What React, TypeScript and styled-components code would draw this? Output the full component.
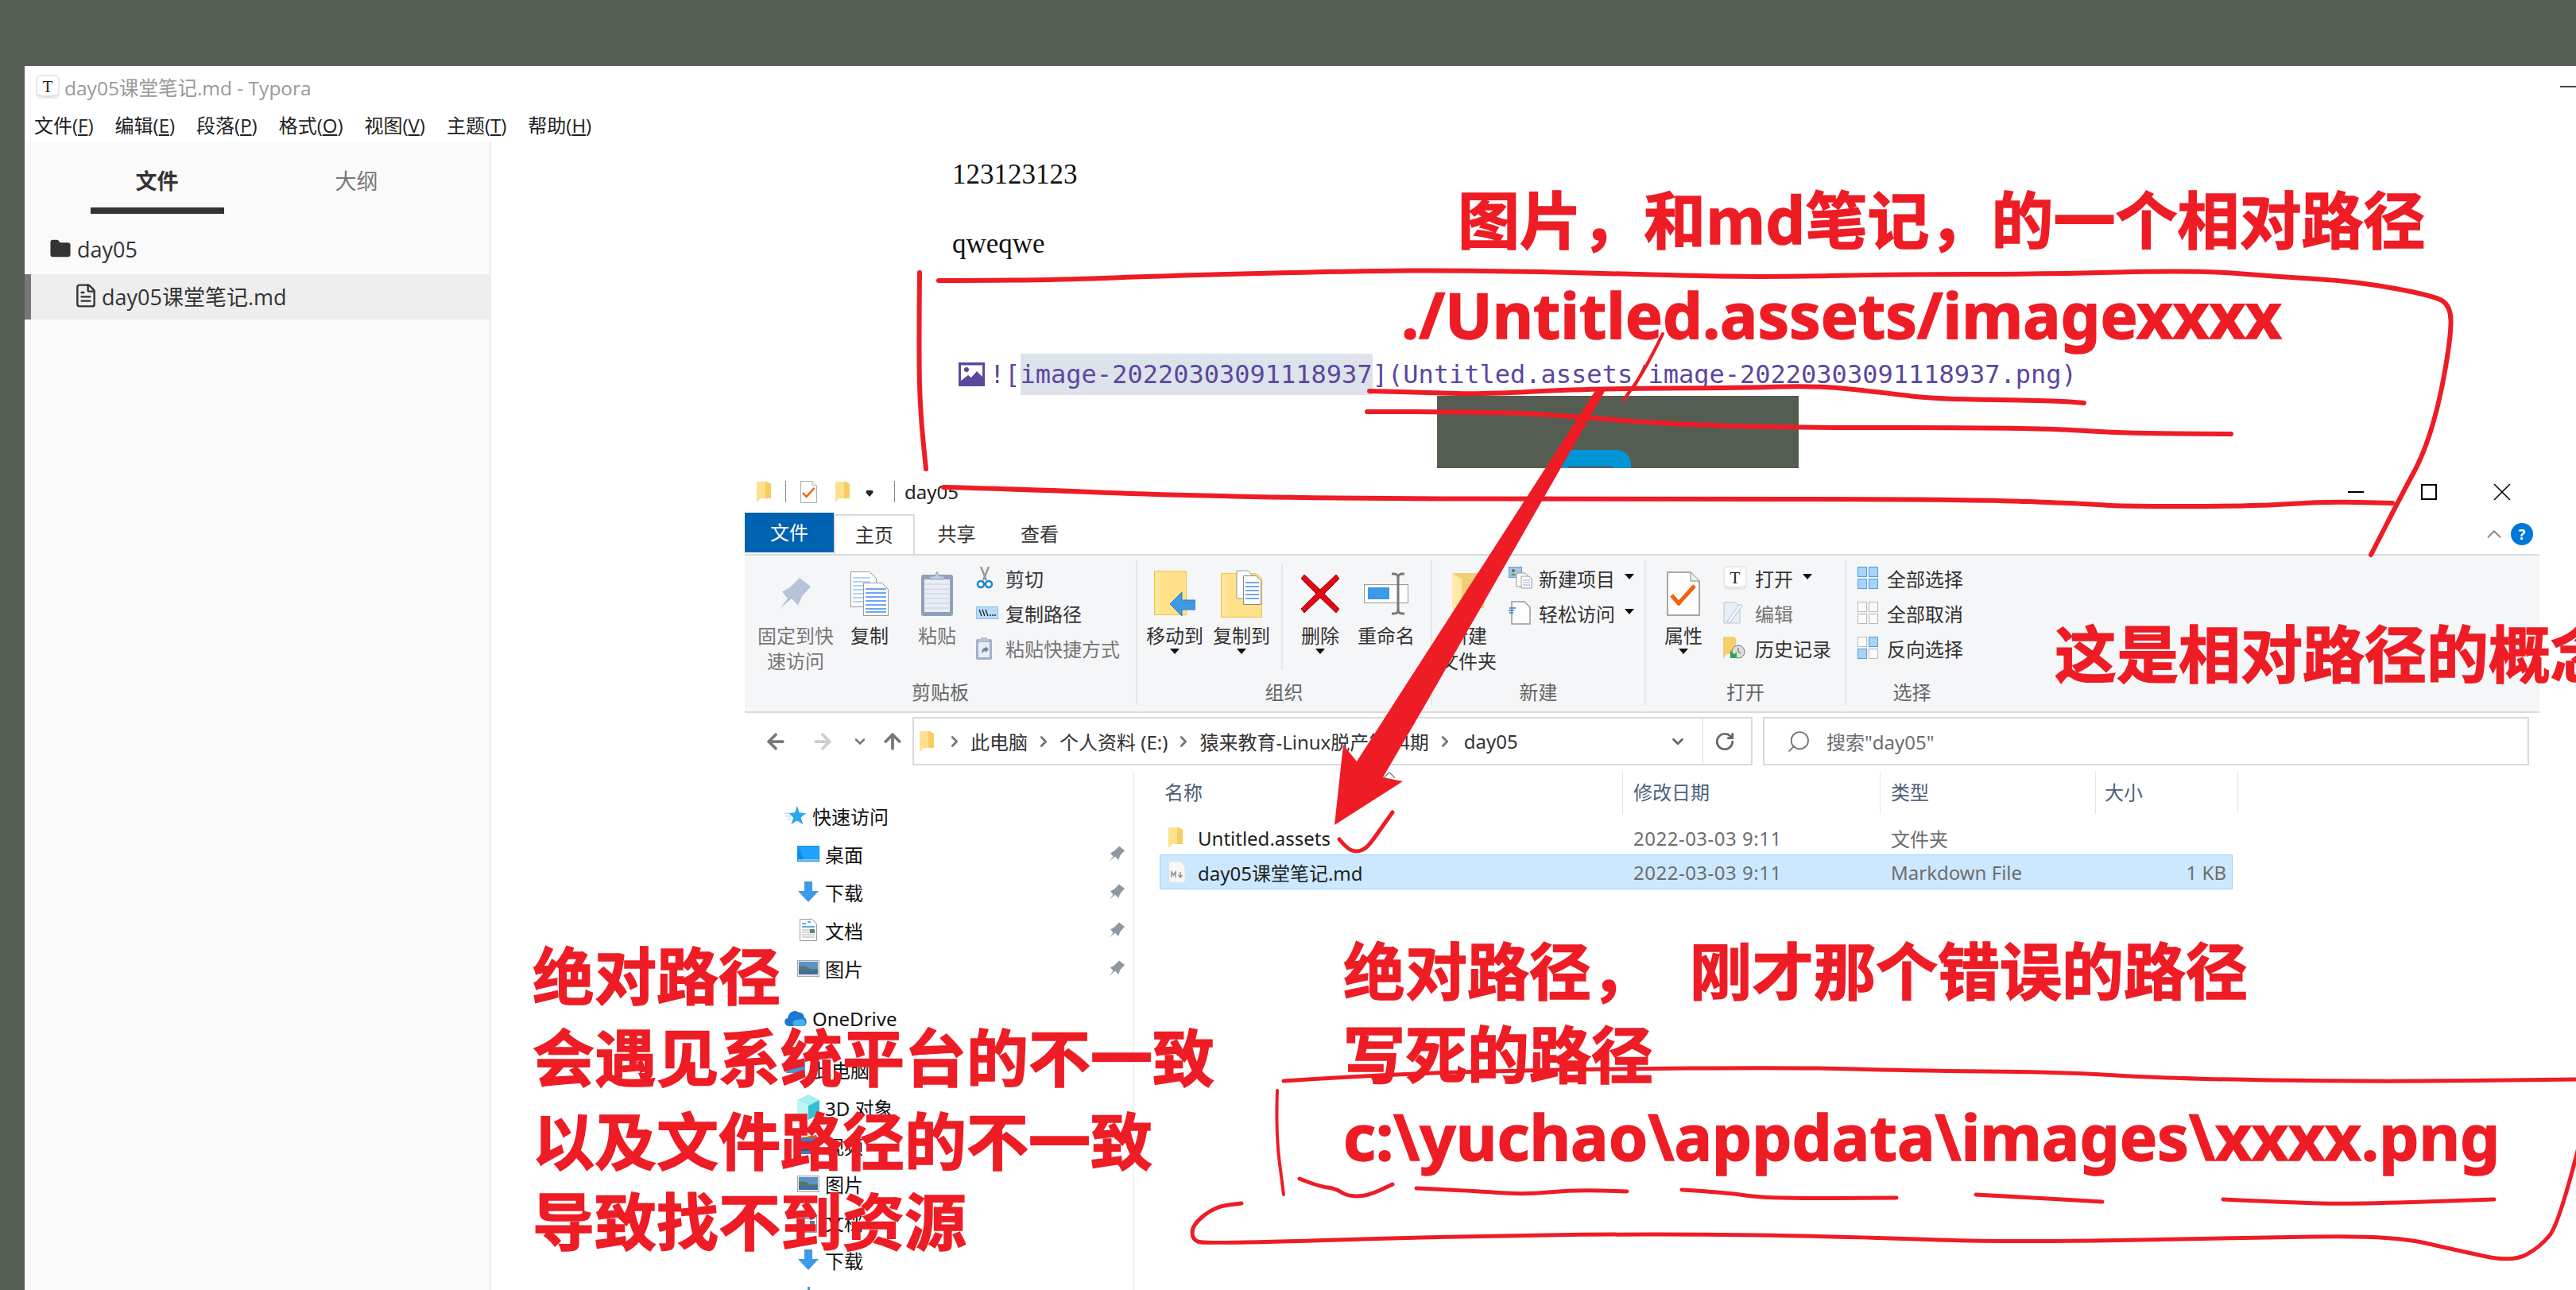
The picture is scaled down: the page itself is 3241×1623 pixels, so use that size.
import React from 'react';
import styled, { createGlobalStyle } from 'styled-components';
import { ArrowLeft, ArrowRight, ArrowUp, ChevronDown, ChevronRight, ChevronUp, FileText, Folder, RotateCw, Search } from 'lucide-react';

const RED = '#ee1c25';
const UI_FONT = '"Noto Sans", "Noto Sans CJK SC", sans-serif';

const GlobalStyle = createGlobalStyle`
  html, body { margin: 0; padding: 0; background: #555d53; }
  * { box-sizing: border-box; }
`;

/* ---------- hand drawn marks ---------- */

type Pt = [number, number];

const smooth = (pts: Pt[]) => {
  let d = `M${pts[0][0]} ${pts[0][1]}`;
  for (let i = 1; i < pts.length - 1; i++) {
    const mx = (pts[i][0] + pts[i + 1][0]) / 2;
    const my = (pts[i][1] + pts[i + 1][1]) / 2;
    d += ` Q${pts[i][0]} ${pts[i][1]} ${mx} ${my}`;
  }
  const last = pts[pts.length - 1];
  return `${d} L${last[0]} ${last[1]}`;
};

const strokes: { w: number; pts: Pt[] }[] = [
  // upper loop
  { w: 6, pts: [[1181, 353], [1310, 353], [1465, 347], [1703, 341], [1844, 340], [2033, 344], [2200, 349], [2399, 345], [2565, 345], [2764, 340], [2864, 348], [2964, 354], [3063, 372], [3083, 385], [3084, 420], [3070, 503], [3050, 570], [3023, 620], [2983, 698]] },
  { w: 6, pts: [[1157, 343], [1156, 447], [1158, 520], [1165, 590]] },
  { w: 6, pts: [[1187, 613], [1300, 616], [1443, 622], [1663, 627], [2050, 628], [2466, 628], [2632, 634], [2665, 637], [2837, 637], [2924, 631], [3010, 633]] },
  // under the code line
  { w: 6, pts: [[1723, 492], [1800, 494], [1867, 496], [1993, 489], [2200, 488], [2286, 485], [2379, 495], [2432, 502], [2585, 504], [2622, 507]] },
  { w: 6, pts: [[1720, 518], [1890, 518], [1993, 525], [2093, 533], [2233, 538], [2565, 538], [2665, 545], [2807, 546]] },
  { w: 4, pts: [[2092, 420], [2070, 465], [2043, 503]] },
  // tick beside Untitled.assets
  { w: 5, pts: [[1685, 1056], [1695, 1068], [1707, 1072], [1720, 1067], [1737, 1043], [1752, 1022]] },
  // lower loop
  { w: 5, pts: [[1615, 1360], [1752, 1351], [1987, 1345], [2269, 1343], [2398, 1347], [2598, 1349], [2727, 1357], [2985, 1361], [3245, 1358]] },
  { w: 4, pts: [[1607, 1372], [1605, 1425], [1615, 1503]] },
  { w: 5, pts: [[3245, 1440], [3220, 1539], [3196, 1569], [3161, 1588], [3091, 1573], [3008, 1554], [2809, 1558], [2515, 1563], [2339, 1556], [2081, 1552], [1811, 1556], [1517, 1565], [1500, 1560], [1500, 1541], [1529, 1518], [1562, 1514]] },
  // scribbles under the path
  { w: 5, pts: [[1635, 1483], [1660, 1493], [1680, 1495], [1695, 1505], [1720, 1505], [1752, 1490]] },
  { w: 5, pts: [[1782, 1495], [1850, 1498], [1917, 1503], [1980, 1497], [2047, 1499]] },
  { w: 5, pts: [[2116, 1497], [2170, 1500], [2222, 1508], [2386, 1507]] },
  { w: 5, pts: [[2486, 1503], [2560, 1507], [2645, 1512]] },
  { w: 5, pts: [[2797, 1509], [2880, 1513], [2961, 1515], [3138, 1509]] },
];

const Marks = () => (
  <MarkLayer viewBox="0 0 3241 1623" fill="none">
    {strokes.map((s, i) => (
      <path key={i} d={smooth(s.pts)} stroke={RED} strokeWidth={s.w} strokeLinecap="round" strokeLinejoin="round" />
    ))}
    <path
      d="M2010 487 L2022 487 L1797 880 L1740 978 L1765 983 L1679 1038 L1690 937 L1707 958 L1757 880 Z"
      fill={RED}
    />
  </MarkLayer>
);

/* ---------- icons ---------- */

const FolderTile = () => (
  <svg width="18" height="28" viewBox="0 0 18 28">
    <path d="M0 1h13l5 3v18H5l-5 5z" fill="#ffe08f" />
    <path d="M11 1h2l5 3v18h-7z" fill="#f6cd62" />
  </svg>
);

const CheckDoc = ({ w, h }: { w: number; h: number }) => (
  <svg width={w} height={h} viewBox="0 0 42 56">
    <path d="M1 1h29l11 11v43H1z" fill="#fff" stroke="#8d8d8d" strokeWidth="1.5" />
    <path d="M30 1v11h11" fill="#eee" stroke="#aaa" strokeWidth="1.5" />
    <path d="M6 30l9 10 20-22" fill="none" stroke="#f26010" strokeWidth="5" />
  </svg>
);

const PinIcon = ({ size, color }: { size: number; color: string }) => (
  <svg width={size} height={size} viewBox="0 0 42 42">
    <path d="M1 40L11 27 4 18.500 14 13 26 1 40 12 29 24 24 36 16 27z" fill={color} />
  </svg>
);

const CopyIcon = () => (
  <svg width="48" height="56" viewBox="0 0 48 56">
    <path d="M.5.5h24l8 8v36H.5z" fill="#fff" stroke="#999" />
    {[8, 13, 18, 23, 28, 33, 38].map(y => (
      <path key={y} d={`M3 ${y}h22`} stroke="#b7d2f5" strokeWidth="2" />
    ))}
    <path d="M16.500 14.500h23l8 8v33h-31z" fill="#fff" stroke="#999" />
    {[22, 27, 32, 37, 42, 47, 51].map(y => (
      <path key={y} d={`M19 ${y}h26`} stroke="#6ea6f0" strokeWidth="2" />
    ))}
  </svg>
);

const ClipboardIcon = () => (
  <svg width="40" height="57" viewBox="0 0 40 57">
    <rect y="5" width="40" height="52" rx="3" fill="#8f9fbd" />
    <rect x="4" y="11" width="32" height="41" fill="#e9edf6" />
    {[17, 23, 29, 35, 41, 47].map(y => (
      <path key={y} d={`M5 ${y}h30`} stroke="#cfd6e4" strokeWidth="1.500" />
    ))}
    <path d="M11 11V7h6l3-6 3 6h6v4z" fill="#c4ccdc" stroke="#8f9fbd" />
  </svg>
);

const ScissorsIcon = () => (
  <svg width="22" height="28" viewBox="0 0 22 28" fill="none">
    <path d="M6 0l7 17M16 0L9 17" stroke="#999" strokeWidth="2.500" />
    <circle cx="6" cy="22" r="4" stroke="#1c85c7" strokeWidth="2.500" />
    <circle cx="16" cy="22" r="4" stroke="#1c85c7" strokeWidth="2.500" />
  </svg>
);

const CopyPathIcon = () => (
  <svg width="28" height="16" viewBox="0 0 28 16" fill="none">
    <rect x=".5" y=".5" width="27" height="15" fill="#b9dcf8" stroke="#8bbfe6" />
    <path d="M4 4l3 8M8 4l3 8M12 4l3 8" stroke="#222" strokeWidth="1.300" />
    <path d="M17 11h2M20 11h2M23 11h2" stroke="#222" strokeWidth="1.500" />
  </svg>
);

const PasteShortcutIcon = () => (
  <svg width="20" height="29" viewBox="0 0 20 29">
    <rect y="3" width="20" height="26" rx="2" fill="#a3b1ca" />
    <rect x="3" y="7" width="14" height="19" fill="#e8edf5" />
    <path d="M6 3V1h8v2h2v3H4V3z" fill="#b9c3d6" />
    <path d="M7 22c0-6 2-8 5-8v-2l4 4-4 4v-2c-2 0-4 1-5 4z" fill="#6f86a8" />
  </svg>
);

const MoveToIcon = () => (
  <svg width="52" height="57" viewBox="0 0 52 57">
    <path d="M.5.500h40v55H.5z" fill="#ffe18c" stroke="#edc649" />
    <path d="M4 2v52M7 2v52" stroke="#fff0bd" strokeWidth="1" />
    <path d="M20 42l15-15v10h17v12H35v8z" fill="#3f9ae6" stroke="#2c7cbf" />
  </svg>
);

const CopyToIcon = () => (
  <svg width="52" height="60" viewBox="0 0 52 60">
    <path d="M.5 4.500h44l7 6v49H.5z" fill="#ffe18c" stroke="#edc649" />
    <path d="M4 6v52M7 6v52" stroke="#fff0bd" strokeWidth="1" />
    <path d="M20 1h14l5 5v30H20z" fill="#fff" stroke="#999" />
    <path d="M28.500 7.500h16l6 6v30h-22z" fill="#fff" stroke="#888" />
    {[16, 21, 26, 31, 36].map(y => (
      <path key={y} d={`M31 ${y}h17`} stroke="#5f9eea" strokeWidth="1.800" />
    ))}
  </svg>
);

const DeleteIcon = () => (
  <svg width="50" height="50" viewBox="0 0 50 50">
    <path d="M5 1l20 19L45 1l4 5-19 19 19 19-4 5-20-19L5 49l-4-5 19-19L1 6z" fill="#e30613" stroke="#8c1010" />
  </svg>
);

const RenameIcon = () => (
  <svg width="56" height="54" viewBox="0 0 56 54" fill="none">
    <rect x=".5" y="15.500" width="55" height="23" fill="#fff" stroke="#999" />
    <rect x="5" y="19" width="27" height="15" fill="#3b99e6" />
    <path d="M35 2h3c4 0 5 2 5 6v38c0 4-1 6-5 6h-3M51 2h-3c-4 0-5 2-5 6v38c0 4 1 6 5 6h3" stroke="#777" strokeWidth="3" />
  </svg>
);

const NewFolderIcon = () => (
  <svg width="40" height="52" viewBox="0 0 40 52">
    <path d="M0 0l12 8v44L0 44z" fill="#ffe9a8" />
    <path d="M0 0h40v44H12V8z" fill="#f0cf75" />
  </svg>
);

const NewItemIcon = () => (
  <svg width="30" height="28" viewBox="0 0 30 28">
    <rect x=".5" y=".5" width="16" height="13" fill="#9ec7ea" stroke="#6e9cc4" />
    <circle cx="6" cy="5" r="2" fill="#8a5a3a" />
    <path d="M3 11c0-3 6-3 6 0z" fill="#4f9a5a" />
    <path d="M10 8h11l3 3v14H10z" fill="#fff" stroke="#999" />
    <path d="M16 12h10l3 3v12H16z" fill="#fff" stroke="#999" />
    {[17, 20, 23].map(y => (
      <path key={y} d={`M18 ${y}h9`} stroke="#88aee0" />
    ))}
  </svg>
);

const EasyAccessIcon = () => (
  <svg width="28" height="30" viewBox="0 0 28 30">
    <path d="M4 1h16l7 7v21H4z" fill="#fff" stroke="#999" strokeWidth="1.500" />
    <path d="M1 9h8M0 12h7M1 15h5" stroke="#2b7cc4" strokeWidth="1.500" />
  </svg>
);

const TyporaTile = ({ size }: { size: number }) => (
  <svg width={size} height={size} viewBox="0 0 30 30">
    <rect x="1" y="1" width="28" height="28" rx="5" fill="#fff" stroke="#e2e2e2" strokeWidth="1.500" />
    <path d="M2 25c4 3 22 3 26 0" fill="none" stroke="#ddd" strokeWidth="2" />
    <text x="15" y="22" textAnchor="middle" fontFamily="Liberation Serif, serif" fontSize="21" fill="#222">T</text>
  </svg>
);

const EditIcon = () => (
  <svg width="26" height="28" viewBox="0 0 26 28">
    <path d="M1 1h15l5 5v21H1z" fill="#e6eef8" stroke="#b8c6da" />
    <path d="M5 25L21 3l3 2L8 27z" fill="#fbfcfe" stroke="#aebcd1" />
  </svg>
);

const HistoryIcon = () => (
  <svg width="28" height="28" viewBox="0 0 28 28">
    <path d="M0 0h14l2 3v19H4l-4 6z" fill="#f5d06a" />
    <circle cx="19" cy="19" r="8" fill="#ddd" stroke="#777" />
    <path d="M19 14v5l3 2" stroke="#555" fill="none" />
    <path d="M9 17l5 5 3-3v8H9z" fill="#2fa84f" />
  </svg>
);

const PanesIcon = ({ on }: { on: boolean[] }) => (
  <svg width="26" height="28" viewBox="0 0 26 28">
    {[[0, 0], [14, 0], [0, 15], [14, 15]].map(([x, y], i) => (
      <rect
        key={i}
        x={x + 0.5}
        y={y + 0.5}
        width="11"
        height="12"
        fill={on[i] ? '#a9d3f7' : '#fbfbfb'}
        stroke={on[i] ? '#4ba1e8' : '#bbb'}
      />
    ))}
  </svg>
);

const StarIcon = () => (
  <svg width="30" height="26" viewBox="0 0 30 26">
    <path d="M17 0l3 9 9 1-7 6 3 9-8-5-8 5 3-9-6-6 8-1z" fill="#2ea5ef" />
    <path d="M0 10h7M2 14h6M4 18h4" stroke="#a8d8f7" strokeWidth="1.300" />
  </svg>
);

const DesktopIcon = () => (
  <svg width="28" height="20" viewBox="0 0 28 20">
    <rect width="28" height="20" fill="#0f8ee8" />
    <path d="M1 1h26v17H9z" fill="#21a3fb" />
    <path d="M1 18h26" stroke="#d7efff" />
  </svg>
);

const DownloadIcon = () => (
  <svg width="28" height="26" viewBox="0 0 28 26">
    <path d="M9 0h10v12h8L14 26 1 12h8z" fill="#3f9ae6" />
  </svg>
);

const DocsIcon = () => (
  <svg width="22" height="28" viewBox="0 0 22 28" fill="none">
    <path d="M.5.5h15l6 6v21H.5z" fill="#fff" stroke="#999" />
    <path d="M3 6h5M10 4h4M3 10h16" stroke="#2c8ee0" strokeWidth="1.500" />
    <path d="M3 14h10M3 17h10M3 20h16M3 23h16" stroke="#aaa" />
    <rect x="13" y="13" width="6" height="5" fill="#5f7f88" />
  </svg>
);

const PictureIcon = () => (
  <svg width="28" height="21" viewBox="0 0 28 21">
    <rect x=".5" y=".5" width="27" height="20" fill="#e8e8e8" stroke="#aaa" />
    <rect x="2" y="2" width="24" height="9" fill="#5b93c9" />
    <path d="M2 8c6-2 10 0 14 3h10v7H2z" fill="#56786a" />
    <rect x="2" y="13" width="24" height="5" fill="#3f6f9d" />
  </svg>
);

const CloudIcon = () => (
  <svg width="34" height="24" viewBox="0 0 34 24">
    <path d="M6 24C-1 23-2 13 5 12 6 4 14-2 21 3c5 0 9 3 9 8 5 1 5 13-1 13z" fill="#1b78d0" />
    <path d="M14 24c-4-6 2-11 7-9 3-3 13-2 11 6-1 2-2 3-4 3z" fill="#3fb0ef" />
  </svg>
);

const PcIcon = () => (
  <svg width="28" height="24" viewBox="0 0 28 24">
    <rect x="2" width="24" height="17" fill="#3f9ae6" />
    <path d="M8 21h12" stroke="#777" strokeWidth="3" />
  </svg>
);

const CubeIcon = () => (
  <svg width="28" height="32" viewBox="0 0 28 32">
    <path d="M14 0l14 7-14 7L0 7z" fill="#a8edf2" />
    <path d="M0 7l14 7v18L0 25z" fill="#bff3f2" />
    <path d="M28 7L14 14v18l14-7z" fill="#36bdd3" />
  </svg>
);

const VideoIcon = () => (
  <svg width="28" height="26" viewBox="0 0 28 26">
    <rect y="4" width="28" height="20" fill="#4a79b5" />
    <rect x="4" y="8" width="20" height="12" fill="#2c5a9a" />
    <path d="M0 4l24-4 2 4z" fill="#c9662b" />
  </svg>
);

const MusicTick = () => (
  <svg width="28" height="28" viewBox="0 0 28 28">
    <path d="M13 0h3v28h-3z" fill="#3f9ae6" />
  </svg>
);

const MdFileIcon = () => (
  <svg width="22" height="28" viewBox="0 0 22 28">
    <path d="M1 1h14l6 6v20H1z" fill="#f7f7f7" stroke="#e3e3e3" />
    <path d="M4 21v-7l2.500 4 2.500-4v7" fill="none" stroke="#888" strokeWidth="1.400" />
    <path d="M15 14v6M12.500 18l2.500 3 2.500-3" fill="none" stroke="#888" strokeWidth="1.400" />
  </svg>
);

const ImageGlyph = () => (
  <svg width="33" height="30" viewBox="0 0 33 30">
    <path d="M0 0h33v30H0z" fill="#5c479f" />
    <path d="M3 3h27v15l-7-7-7 8-4-3-9 7z" fill="#fff" />
    <circle cx="10" cy="9" r="3" fill="#5c479f" />
    <path d="M3 3h27" stroke="#5c479f" />
  </svg>
);

/* ---------- page ---------- */

const Page = styled.div`
  position: relative;
  width: 3241px;
  height: 1623px;
  padding: 83px 0 0 31px;
  overflow: hidden;
  background: #555d53;
  font-family: ${UI_FONT};
`;

const MarkLayer = styled.svg`
  position: absolute;
  left: 0;
  top: 0;
  width: 3241px;
  height: 1623px;
  pointer-events: none;
  z-index: 2;
`;

const Note = styled.div<{ $x: number; $y: number }>`
  position: absolute;
  left: ${p => p.$x}px;
  top: ${p => p.$y - 54}px;
  height: 100px;
  line-height: 100px;
  font-family: "Noto Sans CJK SC", sans-serif;
  font-weight: 700;
  font-size: 78px;
  color: ${RED};
  -webkit-text-stroke: 1.5px ${RED};
  white-space: pre;
  z-index: 3;
`;

const LatinNote = styled(Note)<{ $size: number }>`
  font-family: "Noto Sans", "Noto Sans CJK SC", sans-serif;
  font-size: ${p => p.$size}px;
  margin-top: -2px;
`;

/* typora */

const Typora = styled.div`
  height: 100%;
  display: flex;
  flex-direction: column;
  background: #fff;
  font-family: "Open Sans", "Noto Sans CJK SC", sans-serif;
`;

const TyporaTitle = styled.div`
  height: 52px;
  display: flex;
  align-items: center;
  gap: 6px;
  padding-left: 14px;
  font-size: 24.5px;
  color: #999;
  svg:last-child {
    margin-left: auto;
  }
`;

const MenuBar = styled.div`
  height: 43px;
  display: flex;
  align-items: center;
  gap: 27px;
  padding-left: 12px;
  font-size: 24px;
  color: #222;
`;

const TyporaBody = styled.div`
  flex: 1;
  display: flex;
  min-height: 0;
`;

const Sidebar = styled.aside`
  width: 587px;
  background: #fafafa;
  border-right: 2px solid #eee;
  color: #333;
`;

const SideTabs = styled.div`
  height: 91px;
  display: flex;
  padding-left: 41px;
`;

const SideTab = styled.div<{ $active?: boolean }>`
  width: 251px;
  display: flex;
  justify-content: center;
  align-items: flex-end;
  font-size: 27px;
  line-height: 36px;
  padding-bottom: 23px;
  font-weight: ${p => (p.$active ? 700 : 400)};
  color: ${p => (p.$active ? '#333' : '#777')};
  position: relative;
  &::after {
    content: '';
    display: ${p => (p.$active ? 'block' : 'none')};
    position: absolute;
    left: 42px;
    bottom: 0;
    width: 168px;
    height: 8px;
    background: #333;
  }
`;

const FolderRow = styled.div`
  height: 76px;
  display: flex;
  align-items: center;
  gap: 7px;
  padding: 12px 0 0 31px;
  font-size: 27px;
`;

const FileRow = styled.div`
  height: 57px;
  display: flex;
  align-items: center;
  gap: 4px;
  padding: 0 0 3px 53px;
  font-size: 27px;
  background: #eee;
  border-left: 8px solid #777;
`;

const Editor = styled.main`
  flex: 1;
  padding: 19px 0 0 580px;
`;

const Para = styled.p`
  margin: 0 0 41px;
  line-height: 46px;
  font-family: "Liberation Serif", serif;
  font-size: 35px;
  color: #111;
`;

const CodeLine = styled.div`
  margin-top: 115px;
  height: 52px;
  display: flex;
  align-items: center;
  font-family: "DejaVu Sans Mono", monospace;
  font-size: 32px;
  line-height: 52px;
  color: #5c479f;
  white-space: pre;
  svg {
    margin: 0 6px 0 8px;
  }
`;

const Selected = styled.span`
  background: #dce3eb;
`;

const Preview = styled.div`
  position: relative;
  width: 455px;
  height: 91px;
  margin: 1px 0 0 610px;
  background: #555d53;
  overflow: hidden;
`;

const PreviewBadge = styled.div`
  position: absolute;
  left: 143px;
  bottom: 0;
  width: 101px;
  height: 23px;
  border-radius: 18px 18px 0 0;
  background: #0095d5;
  &::after {
    content: '';
    position: absolute;
    left: 22px;
    bottom: 0;
    width: 57px;
    height: 3px;
    border-radius: 4px 4px 0 0;
    background: #3d6a80;
  }
`;

/* explorer */

const Explorer = styled.section`
  position: absolute;
  left: 937px;
  top: 590px;
  right: 46px;
  bottom: 0;
  z-index: 1;
  display: flex;
  flex-direction: column;
  background: #fff;
  font-size: 24px;
  color: #222;
`;

const WinBar = styled.div`
  height: 57px;
  display: flex;
  align-items: center;
  padding-left: 15px;
`;

const QuickSep = styled.span<{ $flush?: boolean }>`
  width: 1px;
  height: 27px;
  margin: ${p => (p.$flush ? '0' : '0 18px')};
  background: #888;
`;

const QuickGap = styled.span`
  width: 23px;
`;

const QuickDrop = styled.span`
  width: 0;
  height: 0;
  margin: 6px 26px 0 20px;
  border: 5px solid transparent;
  border-top: 6px solid #222;
  border-bottom: 0;
  box-shadow: 0 -3px 0 -1px #222;
`;

const WinTitle = styled.span`
  margin-left: 12px;
  line-height: 32px;
`;

const WinControls = styled.div`
  margin-left: auto;
  padding-right: 1px;
  display: flex;
`;

const WinButton = styled.div`
  width: 92px;
  display: flex;
  justify-content: center;
  align-items: center;
`;

const TabRow = styled.div`
  height: 50px;
  display: flex;
  align-items: center;
`;

const RibbonTab = styled.div<{ $kind?: 'file' | 'active'; $w: number }>`
  width: ${p => p.$w}px;
  height: 50px;
  display: flex;
  justify-content: center;
  align-items: center;
  padding-bottom: 3px;
  margin-top: ${p => (p.$kind === 'file' ? -4 : 0)}px;
  background: ${p => (p.$kind === 'file' ? '#0063b1' : '#fff')};
  color: ${p => (p.$kind === 'file' ? '#fff' : '#333')};
  border: ${p => (p.$kind === 'active' ? '2px solid #dadbdc' : '0')};
  border-bottom: 0;
`;

const TabEnd = styled.div`
  margin-left: auto;
  padding-right: 8px;
  display: flex;
  align-items: center;
  gap: 6px;
  color: #888;
`;

const Help = styled.div`
  width: 28px;
  height: 28px;
  border-radius: 50%;
  display: flex;
  justify-content: center;
  align-items: center;
  background: #0078d7;
  color: #fff;
  font-size: 18px;
  font-weight: 700;
`;

const Ribbon = styled.div`
  height: 200px;
  display: flex;
  padding: 6px 0 8px;
  background: #f5f6f7;
  border-top: 2px solid #dadbdc;
  border-bottom: 2px solid #dadbdc;
`;

const Group = styled.div<{ $w: number; $last?: boolean }>`
  width: ${p => p.$w}px;
  display: flex;
  flex-direction: column;
  border-right: 2px solid ${p => (p.$last ? 'transparent' : '#e4e6e8')};
`;

const GroupBody = styled.div<{ $pad: number }>`
  height: 150px;
  margin-top: 4px;
  display: flex;
  padding-left: ${p => p.$pad}px;
`;

const GroupLabel = styled.div`
  height: 32px;
  line-height: 32px;
  text-align: center;
  color: #666;
`;

const Large = styled.div<{ $w: number; $muted?: boolean; $gap?: number }>`
  width: ${p => p.$w}px;
  margin-left: ${p => p.$gap ?? 0}px;
  display: flex;
  flex-direction: column;
  align-items: center;
  text-align: center;
  line-height: 32px;
  color: ${p => (p.$muted ? '#777' : '#333')};
  white-space: nowrap;
`;

const LargeIcon = styled.div`
  height: 75px;
  display: flex;
  align-items: center;
  justify-content: center;
`;

const Caret = styled.span`
  width: 0;
  height: 0;
  border: 6px solid transparent;
  border-top: 7px solid #111;
  border-bottom: 0;
`;

const SubDivider = styled.div`
  width: 2px;
  height: 134px;
  margin: 0 15px 0 14px;
  background: #e4e6e8;
`;

const SmallColumn = styled.div<{ $gap: number }>`
  margin: -4px 0 0 ${p => p.$gap}px;
  display: flex;
  flex-direction: column;
`;

const Small = styled.div<{ $muted?: boolean }>`
  height: 44px;
  display: flex;
  align-items: center;
  color: ${p => (p.$muted ? '#777' : '#333')};
  white-space: nowrap;
`;

const SmallIcon = styled.span<{ $w?: number }>`
  width: ${p => p.$w ?? 37}px;
  display: flex;
  align-items: center;
  justify-content: flex-start;
`;

const InlineCaret = styled(Caret)`
  margin: 0 0 4px 12px;
`;

const AddressRow = styled.div`
  height: 61px;
  margin-top: 5px;
  display: flex;
  color: #333;
`;

const ArrowBox = styled.div<{ $w: number; $gap?: number; $color: string }>`
  width: ${p => p.$w}px;
  margin-left: ${p => p.$gap ?? 0}px;
  display: flex;
  justify-content: center;
  align-items: center;
  color: ${p => p.$color};
`;

const Crumbs = styled.div`
  width: 1057px;
  margin-left: 6px;
  display: flex;
  align-items: center;
  gap: 9px;
  padding-left: 7px;
  border: 2px solid #d9d9d9;
  white-space: nowrap;
  svg:first-child {
    margin-right: 6px;
  }
`;

const CrumbArrow = styled(ChevronRight)`
  flex: none;
  color: #777;
`;

const CrumbLast = styled.span`
  margin-left: 4px;
`;

const CrumbEnd = styled.div`
  margin-left: auto;
  height: 100%;
  display: flex;
  align-items: center;
  color: #666;
`;

const CrumbDrop = styled.div`
  width: 58px;
  height: 100%;
  display: flex;
  align-items: center;
  justify-content: center;
  border-right: 1px solid #d9d9d9;
`;

const CrumbRefresh = styled.div`
  width: 60px;
  display: flex;
  justify-content: center;
`;

const SearchBox = styled.div`
  width: 964px;
  margin-left: 13px;
  display: flex;
  align-items: center;
  gap: 19px;
  padding-left: 27px;
  border: 2px solid #d9d9d9;
  color: #6d6d6d;
  svg {
    transform: scaleX(-1);
  }
`;

const Split = styled.div`
  flex: 1;
  min-height: 0;
  margin-top: 7px;
  display: flex;
`;

const Nav = styled.nav`
  width: 490px;
  padding: 32px 9px 0 0;
  border-right: 2px solid #f2f2f2;
  overflow: hidden;
`;

const NavRow = styled.div<{ $top?: boolean; $gap?: number }>`
  height: 48px;
  margin-top: ${p => p.$gap ?? 0}px;
  display: flex;
  align-items: center;
  padding-left: ${p => (p.$top ? 50 : 66)}px;
  color: #111;
  white-space: nowrap;
`;

const NavIcon = styled.span`
  width: 35px;
  display: flex;
  justify-content: center;
  padding-right: 7px;
`;

const NavPin = styled.span`
  margin-left: auto;
  display: flex;
`;

const List = styled.div`
  width: 1350px;
  margin-left: 32px;
  position: relative;
`;

const HeaderRow = styled.div`
  height: 54px;
  display: grid;
  grid-template-columns: 583px 324px 271px 179px;
  color: #4c607a;
  margin-bottom: 9px;
`;

const HeaderCell = styled.div<{ $pad: number }>`
  display: flex;
  align-items: center;
  padding: 0 0 3px ${p => p.$pad}px;
  border-right: 1px solid #e5e5e5;
`;

const SortMark = styled(ChevronUp)`
  position: absolute;
  left: 276px;
  top: -8px;
  color: #777;
`;

const FileGrid = styled.div<{ $selected?: boolean }>`
  height: ${p => (p.$selected ? 44 : 42)}px;
  display: grid;
  grid-template-columns: 583px 324px 271px 1fr;
  align-items: center;
  background: ${p => (p.$selected ? '#cce8ff' : 'transparent')};
  outline: ${p => (p.$selected ? '1px solid #99d1ff' : '0')};
  outline-offset: -1px;
`;

const NameCell = styled.div`
  display: flex;
  align-items: center;
  gap: 15px;
  padding-left: 11px;
  color: #1e1e1e;
`;

const IconSlot = styled.span`
  width: 22px;
  display: flex;
`;

const MetaCell = styled.div<{ $right?: boolean }>`
  padding: ${p => (p.$right ? '0 8px 0 0' : '0 0 0 13px')};
  text-align: ${p => (p.$right ? 'right' : 'left')};
  color: #6d6d6d;
`;

const DateCell = styled(MetaCell)`
  letter-spacing: 0.5px;
`;

const PINNED = [
  { icon: <DesktopIcon />, label: '桌面' },
  { icon: <DownloadIcon />, label: '下载' },
  { icon: <DocsIcon />, label: '文档' },
  { icon: <PictureIcon />, label: '图片' },
];

const PC_ITEMS = [
  { icon: <CubeIcon />, label: '3D 对象' },
  { icon: <VideoIcon />, label: '视频' },
  { icon: <PictureIcon />, label: '图片' },
  { icon: <DocsIcon />, label: '文档' },
  { icon: <DownloadIcon />, label: '下载' },
  { icon: <MusicTick />, label: '音乐' },
];

const MENU = [
  ['文件(', 'F', ')'],
  ['编辑(', 'E', ')'],
  ['段落(', 'P', ')'],
  ['格式(', 'O', ')'],
  ['视图(', 'V', ')'],
  ['主题(', 'T', ')'],
  ['帮助(', 'H', ')'],
];

const ExplorerWindow = () => (
  <Explorer>
    <WinBar>
      <FolderTile />
      <QuickSep />
      <CheckDoc w={21} h={28} />
      <QuickGap />
      <FolderTile />
      <QuickDrop />
      <QuickSep $flush />
      <WinTitle>day05</WinTitle>
      <WinControls>
        <WinButton>
          <svg width="20" height="20" viewBox="0 0 20 20"><path d="M0 10h20" stroke="#000" strokeWidth="2" /></svg>
        </WinButton>
        <WinButton>
          <svg width="20" height="20" viewBox="0 0 20 20"><rect x="1" y="1" width="18" height="18" fill="none" stroke="#000" strokeWidth="2" /></svg>
        </WinButton>
        <WinButton>
          <svg width="22" height="20" viewBox="0 0 22 20"><path d="M1 0l20 20M21 0L1 20" stroke="#000" strokeWidth="1.500" /></svg>
        </WinButton>
      </WinControls>
    </WinBar>

    <TabRow>
      <RibbonTab $kind="file" $w={112}>文件</RibbonTab>
      <RibbonTab $kind="active" $w={102}>主页</RibbonTab>
      <RibbonTab $w={105}>共享</RibbonTab>
      <RibbonTab $w={104}>查看</RibbonTab>
      <TabEnd>
        <ChevronUp size={30} strokeWidth={1.5} />
        <Help>?</Help>
      </TabEnd>
    </TabRow>

    <Ribbon>
      <Group $w={494}>
        <GroupBody $pad={14}>
          <Large $w={100} $muted>
            <LargeIcon><PinIcon size={42} color="#b7c3d6" /></LargeIcon>
            固定到快
            <br />
            速访问
          </Large>
          <Large $w={86}>
            <LargeIcon><CopyIcon /></LargeIcon>
            复制
          </Large>
          <Large $w={84} $muted>
            <LargeIcon><ClipboardIcon /></LargeIcon>
            粘贴
          </Large>
          <SmallColumn $gap={7}>
            <Small><SmallIcon><ScissorsIcon /></SmallIcon>剪切</Small>
            <Small><SmallIcon><CopyPathIcon /></SmallIcon>复制路径</Small>
            <Small $muted><SmallIcon><PasteShortcutIcon /></SmallIcon>粘贴快捷方式</Small>
          </SmallColumn>
        </GroupBody>
        <GroupLabel>剪贴板</GroupLabel>
      </Group>

      <Group $w={371}>
        <GroupBody $pad={11}>
          <Large $w={72}>
            <LargeIcon><MoveToIcon /></LargeIcon>
            移动到
            <Caret />
          </Large>
          <Large $w={72} $gap={12}>
            <LargeIcon><CopyToIcon /></LargeIcon>
            复制到
            <Caret />
          </Large>
          <SubDivider />
          <Large $w={64}>
            <LargeIcon><DeleteIcon /></LargeIcon>
            删除
            <Caret />
          </Large>
          <Large $w={72} $gap={15}>
            <LargeIcon><RenameIcon /></LargeIcon>
            重命名
          </Large>
        </GroupBody>
        <GroupLabel>组织</GroupLabel>
      </Group>

      <Group $w={269}>
        <GroupBody $pad={9}>
          <Large $w={72}>
            <LargeIcon><NewFolderIcon /></LargeIcon>
            新建
            <br />
            文件夹
          </Large>
          <SmallColumn $gap={15}>
            <Small><SmallIcon $w={38}><NewItemIcon /></SmallIcon>新建项目<InlineCaret /></Small>
            <Small><SmallIcon $w={38}><EasyAccessIcon /></SmallIcon>轻松访问<InlineCaret /></Small>
          </SmallColumn>
        </GroupBody>
        <GroupLabel>新建</GroupLabel>
      </Group>

      <Group $w={252}>
        <GroupBody $pad={11}>
          <Large $w={72}>
            <LargeIcon><CheckDoc w={42} h={56} /></LargeIcon>
            属性
            <Caret />
          </Large>
          <SmallColumn $gap={14}>
            <Small><SmallIcon $w={40}><TyporaTile size={30} /></SmallIcon>打开<InlineCaret /></Small>
            <Small $muted><SmallIcon $w={40}><EditIcon /></SmallIcon>编辑</Small>
            <Small><SmallIcon $w={40}><HistoryIcon /></SmallIcon>历史记录</Small>
          </SmallColumn>
        </GroupBody>
        <GroupLabel>打开</GroupLabel>
      </Group>

      <Group $w={167} $last>
        <GroupBody $pad={14}>
          <SmallColumn $gap={0}>
            <Small><SmallIcon><PanesIcon on={[true, true, true, true]} /></SmallIcon>全部选择</Small>
            <Small><SmallIcon><PanesIcon on={[false, false, false, false]} /></SmallIcon>全部取消</Small>
            <Small><SmallIcon><PanesIcon on={[false, true, true, false]} /></SmallIcon>反向选择</Small>
          </SmallColumn>
        </GroupBody>
        <GroupLabel>选择</GroupLabel>
      </Group>
    </Ribbon>

    <AddressRow>
      <ArrowBox $w={50} $gap={14} $color="#777"><ArrowLeft size={30} strokeWidth={3} /></ArrowBox>
      <ArrowBox $w={50} $gap={9} $color="#ccc"><ArrowRight size={30} strokeWidth={3} /></ArrowBox>
      <ArrowBox $w={44} $color="#777"><ChevronDown size={20} strokeWidth={3} /></ArrowBox>
      <ArrowBox $w={38} $color="#777"><ArrowUp size={30} strokeWidth={3} /></ArrowBox>
      <Crumbs>
        <FolderTile />
        <CrumbArrow size={22} strokeWidth={3} />
        <span>此电脑</span>
        <CrumbArrow size={22} strokeWidth={3} />
        <span>个人资料 (E:)</span>
        <CrumbArrow size={22} strokeWidth={3} />
        <span>猿来教育-Linux脱产第24期</span>
        <CrumbArrow size={22} strokeWidth={3} />
        <CrumbLast>day05</CrumbLast>
        <CrumbEnd>
          <CrumbDrop><ChevronDown size={22} strokeWidth={3} /></CrumbDrop>
          <CrumbRefresh><RotateCw size={26} strokeWidth={2.5} /></CrumbRefresh>
        </CrumbEnd>
      </Crumbs>
      <SearchBox>
        <Search size={32} strokeWidth={1.3} />
        搜索"day05"
      </SearchBox>
    </AddressRow>

    <Split>
      <Nav>
        <NavRow $top><NavIcon><StarIcon /></NavIcon>快速访问</NavRow>
        {PINNED.map(item => (
          <NavRow key={item.label}>
            <NavIcon>{item.icon}</NavIcon>
            {item.label}
            <NavPin><PinIcon size={21} color="#8d98a3" /></NavPin>
          </NavRow>
        ))}
        <NavRow $top $gap={15}><NavIcon><CloudIcon /></NavIcon>OneDrive</NavRow>
        <NavRow $top $gap={16}><NavIcon><PcIcon /></NavIcon>此电脑</NavRow>
        {PC_ITEMS.map(item => (
          <NavRow key={item.label}>
            <NavIcon>{item.icon}</NavIcon>
            {item.label}
          </NavRow>
        ))}
      </Nav>
      <List>
        <SortMark size={26} strokeWidth={1.2} />
        <HeaderRow>
          <HeaderCell $pad={6}>名称</HeaderCell>
          <HeaderCell $pad={13}>修改日期</HeaderCell>
          <HeaderCell $pad={13}>类型</HeaderCell>
          <HeaderCell $pad={11}>大小</HeaderCell>
        </HeaderRow>
        <FileGrid>
          <NameCell><IconSlot><FolderTile /></IconSlot>Untitled.assets</NameCell>
          <DateCell>2022-03-03 9:11</DateCell>
          <MetaCell>文件夹</MetaCell>
          <MetaCell />
        </FileGrid>
        <FileGrid $selected>
          <NameCell><IconSlot><MdFileIcon /></IconSlot>day05课堂笔记.md</NameCell>
          <DateCell>2022-03-03 9:11</DateCell>
          <MetaCell>Markdown File</MetaCell>
          <MetaCell $right>1 KB</MetaCell>
        </FileGrid>
      </List>
    </Split>
  </Explorer>
);

export default function App() {
  return (
    <Page>
      <GlobalStyle />
      <Typora>
        <TyporaTitle>
          <TyporaTile size={30} />
          day05课堂笔记.md - Typora
          <svg width="20" height="4" viewBox="0 0 20 4"><path d="M0 2h20" stroke="#444" strokeWidth="2" /></svg>
        </TyporaTitle>
        <MenuBar>
          {MENU.map(([a, key, b]) => (
            <span key={key}>{a}<u>{key}</u>{b}</span>
          ))}
        </MenuBar>
        <TyporaBody>
          <Sidebar>
            <SideTabs>
              <SideTab $active>文件</SideTab>
              <SideTab>大纲</SideTab>
            </SideTabs>
            <FolderRow>
              <Folder size={28} fill="#333" strokeWidth={1.5} />
              day05
            </FolderRow>
            <FileRow>
              <FileText size={32} strokeWidth={1.8} />
              day05课堂笔记.md
            </FileRow>
          </Sidebar>
          <Editor>
            <Para>123123123</Para>
            <Para>qweqwe</Para>
            <CodeLine>
              <ImageGlyph />
              ![<Selected>image-20220303091118937</Selected>](Untitled.assets/image-20220303091118937.png)
            </CodeLine>
            <Preview><PreviewBadge /></Preview>
          </Editor>
        </TyporaBody>
      </Typora>

      <ExplorerWindow />
      <Marks />

      <Note $x={1834} $y={277}>图片，和md笔记，的一个相对路径</Note>
      <LatinNote $x={1763} $y={402} $size={79}>./Untitled.assets/imagexxxx</LatinNote>
      <Note $x={2585} $y={823}>这是相对路径的概念</Note>
      <Note $x={670} $y={1228}>绝对路径</Note>
      <Note $x={670} $y={1331}>会遇见系统平台的不一致</Note>
      <Note $x={670} $y={1436}>以及文件路径的不一致</Note>
      <Note $x={670} $y={1537}>导致找不到资源</Note>
      <Note $x={1690} $y={1222}>绝对路径，</Note>
      <Note $x={2126} $y={1222}>刚才那个错误的路径</Note>
      <Note $x={1690} $y={1327}>写死的路径</Note>
      <LatinNote $x={1690} $y={1435} $size={79.5}>c:\yuchao\appdata\images\xxxx.png</LatinNote>
    </Page>
  );
}
